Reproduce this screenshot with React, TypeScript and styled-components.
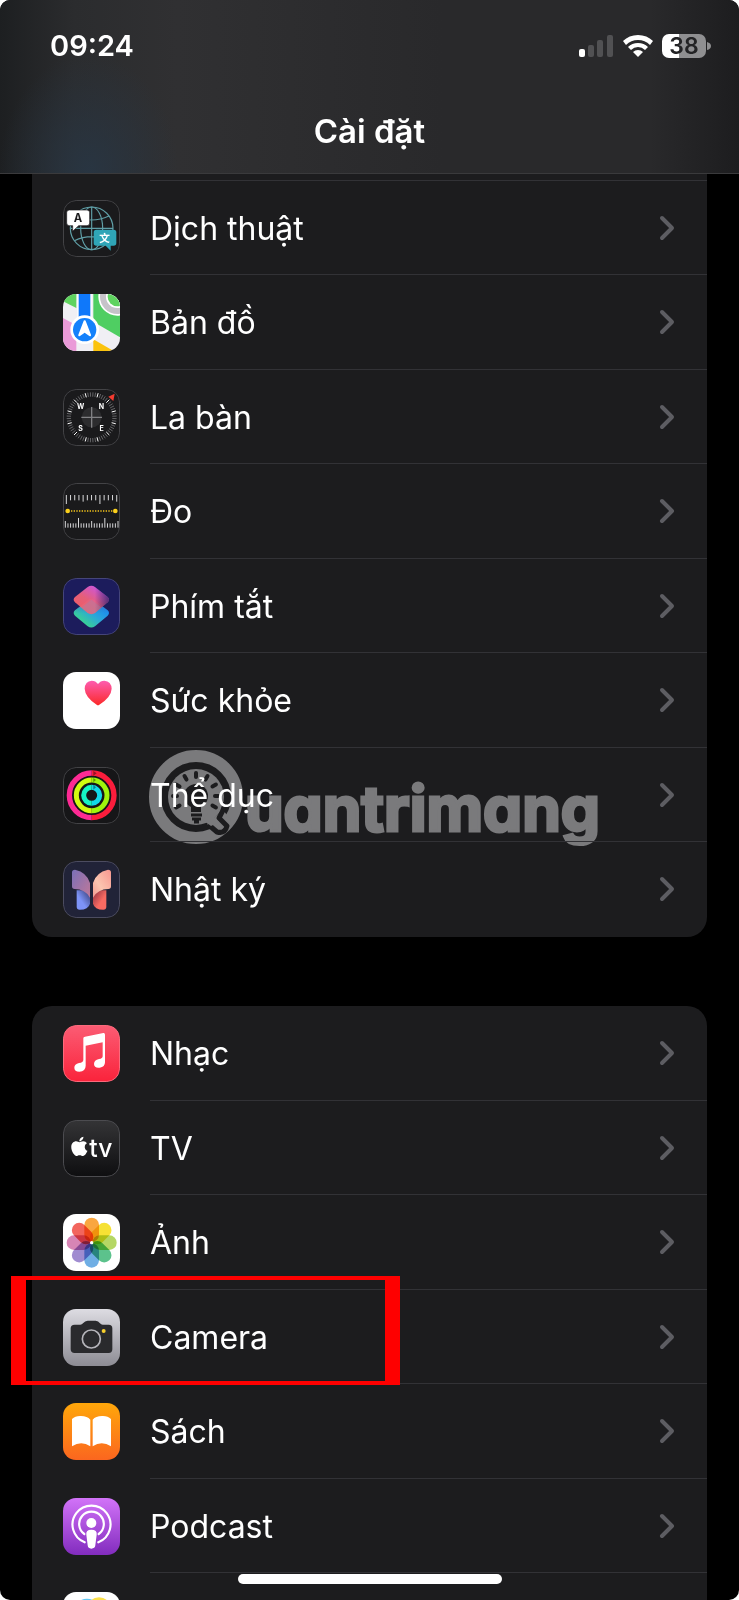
import React from "react";
import styled, { createGlobalStyle } from "styled-components";
import { FaApple } from "react-icons/fa";

const FONT = `Inter, "Noto Sans", "Liberation Sans", sans-serif`;

const GlobalStyle = createGlobalStyle`
  * { box-sizing: border-box; }
  html, body { margin: 0; background: #fff; }
  body { font-family: ${FONT}; color: #fff; }
`;

const Screen = styled.div`
  position: relative;
  display: flex;
  flex-direction: column;
  height: 100vh;
  overflow: hidden;
  background: #000;
  border-radius: 10px;
`;

const Header = styled.header`
  flex: none;
  height: 174px;
  border-bottom: 1px solid #3a3a3c;
  background:
    radial-gradient(ellipse 90px 120px at 12% 100%, rgba(40, 54, 68, 0.9), rgba(40, 54, 68, 0)),
    linear-gradient(90deg, #1d1f21 0%, #2b2c2e 10%, #303032 24%, #29292b 60%, #29292b 88%, #1d1d1f 100%);
`;

const StatusBar = styled.div`
  display: flex;
  align-items: center;
  justify-content: space-between;
  padding: 28px 28px 0 50px;
  height: 63px;
`;

const Time = styled.time`
  font-size: 29px;
  line-height: 34px;
  font-weight: 600;
`;

const StatusIcons = styled.div`
  display: flex;
  align-items: center;
  gap: 9px;
`;

const Title = styled.h1`
  margin: 47px 0 0;
  text-align: center;
  font-size: 33px;
  line-height: 42px;
  font-weight: 600;
`;

const Content = styled.main`
  flex: 1;
  min-height: 0;
  display: flex;
  flex-direction: column;
  gap: 69px;
  padding: 0 32px;
`;

const Group = styled.ul<{ $open?: "top" | "bottom" }>`
  flex: none;
  list-style: none;
  margin: 0;
  padding: 0;
  background: #1c1c1e;
  border-radius: ${(p) => (p.$open === "top" ? "0 0 20px 20px" : "20px 20px 0 0")};
`;

const Item = styled.li`
  position: relative;
  height: 95px;
  &:nth-child(even) {
    height: 94px;
  }
`;

const ScrolledItem = styled.li`
  height: 7px;
  margin-left: 118px;
  border-bottom: 1px solid #323236;
`;

const RowLink = styled.a`
  position: relative;
  display: flex;
  align-items: center;
  height: 100%;
  padding-left: 31px;
  gap: 30px;
  color: inherit;
  text-decoration: none;
`;

const RowBody = styled.span<{ $last?: boolean }>`
  flex: 1;
  display: flex;
  align-items: center;
  justify-content: space-between;
  height: 100%;
  padding-right: 32px;
  border-bottom: 1px solid ${(p) => (p.$last ? "transparent" : "#323236")};
`;

const Label = styled.span`
  padding-top: 2px;
  font-size: 32px;
  line-height: 42px;
  font-weight: 400;
  white-space: nowrap;
`;

const AppIcon = styled.svg`
  flex: none;
  display: block;
  width: 57px;
  height: 57px;
  border-radius: 13px;
`;

const Watermark = styled.div`
  position: absolute;
  left: 117px;
  top: 2px;
  display: flex;
  color: #7a7a7c;
  pointer-events: none;
`;

const WatermarkText = styled.span`
  margin-top: 21px;
  font-size: 62px;
  line-height: 76px;
  font-weight: 700;
  font-feature-settings: "cv11";
  -webkit-text-stroke: 3px #7a7a7c;
`;

const Highlight = styled.div`
  position: absolute;
  left: -21px;
  top: -14px;
  width: 389px;
  height: 109px;
  border: solid #fe0000;
  border-width: 4px 15px;
  z-index: 2;
`;

const HomeIndicator = styled.div`
  position: absolute;
  left: 50%;
  bottom: 16px;
  width: 264px;
  height: 10px;
  margin-left: -132px;
  border-radius: 5px;
  background: #fff;
  z-index: 3;
`;

const Svg = styled.svg`
  display: block;
  flex: none;
`;

function Frame({ fill, edge = "#434346" }: { fill: string; edge?: string }) {
  return <rect x="1.5" y="1.5" width="168" height="168" rx="38" fill={fill} stroke={edge} strokeWidth="3" />;
}

function polar(cx: number, cy: number, r: number, deg: number) {
  const a = ((deg - 90) * Math.PI) / 180;
  return [cx + r * Math.cos(a), cy + r * Math.sin(a)];
}

const TranslateIcon = () => (
  <AppIcon viewBox="0 0 171 171">
    <Frame fill="#1a1a1c" />
    <g fill="none" stroke="#5f9ea6" strokeWidth="3.5">
      <circle cx="86" cy="85" r="64" />
      <ellipse cx="86" cy="85" rx="33" ry="64" />
      <path d="M86 21V149M22 85H150M34 48Q86 72 138 48M34 122Q86 98 138 122" />
    </g>
    <path d="M19 30H72Q80 30 80 38V69Q80 77 72 77H47L29 94V77H19Q11 77 11 69V38Q11 30 19 30Z" fill="#fff" stroke="#1a1a1c" strokeWidth="2" />
    <text x="45" y="66" textAnchor="middle" fontFamily={FONT} fontSize="34" fontWeight="700" fill="#1a1a1c">A</text>
    <path d="M100 89H152Q160 89 160 97V129Q160 137 152 137H143V152L128 137H100Q92 137 92 129V97Q92 89 100 89Z" fill="#2fa5b7" />
    <text x="125" y="125" textAnchor="middle" fontFamily={`"Noto Sans CJK SC", sans-serif`} fontSize="32" fontWeight="700" fill="#fff">文</text>
  </AppIcon>
);

const MapsIcon = () => (
  <AppIcon viewBox="0 0 171 171">
    <rect width="171" height="171" fill="#f0eff4" />
    <path d="M0 0H40V42L0 22Z" fill="#5fd35f" />
    <path d="M91 0H171V130L91 83Z" fill="#4fce62" />
    <circle cx="163" cy="8" r="57" fill="#fff" />
    <circle cx="163" cy="8" r="52" fill="#c6c3c9" />
    <circle cx="163" cy="8" r="34" fill="#fff" />
    <circle cx="163" cy="8" r="29" fill="#5fd35f" />
    <path d="M0 72L40 94V171H0Z" fill="#ea9ad8" />
    <path d="M91 136L152 171H91Z" fill="#fbc30d" />
    <path d="M43 0H86V90H43Z" fill="#fff" />
    <path d="M47 0H82V90H47Z" fill="#0f78fa" />
    <circle cx="65" cy="107" r="43" fill="#fff" />
    <circle cx="65" cy="107" r="35" fill="#1481fb" />
    <path d="M65 79Q68 79 69 83L84 122Q85 129 79 126L65 116L51 126Q45 129 46 122L61 83Q62 79 65 79Z" fill="#fff" />
  </AppIcon>
);

const CompassIcon = () => (
  <AppIcon viewBox="0 0 171 171">
    <Frame fill="#1a1a1c" />
    {Array.from({ length: 60 }, (_, i) => {
      const [x1, y1] = polar(86, 85, 62, i * 6 + 45);
      const [x2, y2] = polar(86, 85, 75, i * 6 + 45);
      return <line key={i} x1={x1} y1={y1} x2={x2} y2={y2} stroke={i % 5 === 0 ? "#fff" : "#8b8b8e"} strokeWidth={i % 5 === 0 ? 3 : 2} />;
    })}
    <circle cx="86" cy="85" r="30" fill="#2c2c2e" />
    <path d="M86 54V116M55 85H117" stroke="#818184" strokeWidth="4" />
    <path d="M136 23L155 14L151 36Z" fill="#f33b30" />
    <g fill="#fff" fontFamily={FONT} fontSize="21" fontWeight="700" textAnchor="middle">
      <text x="53" y="60">W</text>
      <text x="115" y="60">N</text>
      <text x="53" y="125">S</text>
      <text x="116" y="125">E</text>
    </g>
  </AppIcon>
);

const MeasureIcon = () => (
  <AppIcon viewBox="0 0 171 171">
    <Frame fill="#1a1a1c" />
    <g stroke="#d8d8da" strokeWidth="3">
      {Array.from({ length: 13 }, (_, i) => {
        const x = 10 + i * 12.6;
        return <line key={i} x1={x} x2={x} y1="36" y2={i % 8 === 0 ? 63 : i % 4 === 0 ? 56 : 52} />;
      })}
      {Array.from({ length: 21 }, (_, i) => {
        const x = 7 + i * 7.9;
        return <line key={i} x1={x} x2={x} y1={i % 10 === 5 ? 105 : i % 5 === 0 ? 114 : 121} y2="134" />;
      })}
    </g>
    <path d="M24 84H148" stroke="#f5c518" strokeWidth="4" strokeDasharray="4 4" />
    <circle cx="14" cy="84" r="7" fill="#fbd01c" />
    <circle cx="157" cy="84" r="7" fill="#fbd01c" />
  </AppIcon>
);

const UPPER_TILE = "M74 27Q85 20 96 27L134 57Q142 65 134 73L96 105Q85 112 74 105L36 73Q28 65 36 57Z";
const LOWER_TILE = "M76 67Q85 60 94 67L134 97Q142 105 134 113L96 145Q85 152 74 145L36 113Q28 105 36 97Z";

const ShortcutsIcon = () => (
  <AppIcon viewBox="0 0 171 171">
    <defs>
      <linearGradient id="scA" x1="0" y1="1" x2="1" y2="0">
        <stop offset="0.1" stopColor="#3fe07a" />
        <stop offset="0.5" stopColor="#2ba8d8" />
        <stop offset="0.9" stopColor="#147efb" />
      </linearGradient>
      <linearGradient id="scB" x1="0.2" y1="0.9" x2="0.8" y2="0.1">
        <stop offset="0.1" stopColor="#f8606a" />
        <stop offset="0.45" stopColor="#f0627a" />
        <stop offset="1" stopColor="#d558e6" />
      </linearGradient>
      <linearGradient id="scC" x1="0" y1="0" x2="1" y2="0">
        <stop offset="0.6" stopColor="#1c1c5e" stopOpacity="0" />
        <stop offset="1" stopColor="#1c1c5e" stopOpacity="0.7" />
      </linearGradient>
      <linearGradient id="scD" x1="0" y1="0" x2="0" y2="1">
        <stop offset="0" stopColor="#6a4a80" stopOpacity="0.6" />
        <stop offset="0.5" stopColor="#406a90" stopOpacity="0" />
      </linearGradient>
    </defs>
    <Frame fill="#1c1c5c" edge="#45457a" />
    <path d={LOWER_TILE} fill="url(#scA)" />
    <path d={LOWER_TILE} fill="url(#scD)" />
    <path d={UPPER_TILE} fill="url(#scB)" opacity="0.95" />
    <path d={UPPER_TILE} fill="url(#scC)" />
    <path d="M85 65L116 89L96 105Q85 112 74 105L54 89Z" fill="#8b8fc0" opacity="0.3" />
  </AppIcon>
);

const HealthIcon = () => (
  <AppIcon viewBox="0 0 171 171">
    <defs>
      <linearGradient id="heart" x1="0" y1="0" x2="0" y2="1">
        <stop offset="0" stopColor="#fd5cb0" />
        <stop offset="1" stopColor="#fb2a2a" />
      </linearGradient>
    </defs>
    <rect width="171" height="171" fill="#fff" />
    <path d="M105 36Q98 26 86 26Q66 28 65 50Q66 75 101 98Q105 101 109 98Q145 75 146 50Q145 28 124 26Q112 26 105 36Z" fill="url(#heart)" />
  </AppIcon>
);

const FitnessIcon = () => (
  <AppIcon viewBox="0 0 171 171">
    <Frame fill="#161618" />
    <g fill="none">
      <path d="M86 18A67 67 0 0 1 86 152" stroke="#fb1d3c" strokeWidth="16" />
      <path d="M86 152A67 67 0 0 1 86 18" stroke="#fd2a94" strokeWidth="16" />
      <path d="M86 39A46 46 0 0 1 86 131" stroke="#9ff60c" strokeWidth="15" />
      <path d="M86 131A46 46 0 0 1 86 39" stroke="#d2fb10" strokeWidth="15" />
      <path d="M86 61A24 24 0 0 1 86 109" stroke="#12d8e8" strokeWidth="15" />
      <path d="M86 109A24 24 0 0 1 86 61" stroke="#15f5c4" strokeWidth="15" />
    </g>
    <g fill="#000" opacity="0.4">
      <path d="M91 12L101 19L91 26Z" />
      <path d="M91 33L99 39L91 46Z" />
      <path d="M91 54L99 61L91 68Z" />
    </g>
  </AppIcon>
);

const JournalIcon = () => (
  <AppIcon viewBox="0 0 171 171">
    <defs>
      <linearGradient id="jA" x1="0" y1="0" x2="1" y2="1">
        <stop offset="0" stopColor="#7a70b8" />
        <stop offset="1" stopColor="#c07898" />
      </linearGradient>
      <linearGradient id="jB" x1="1" y1="0" x2="0" y2="1">
        <stop offset="0" stopColor="#f7968f" />
        <stop offset="0.6" stopColor="#fbc5b0" />
        <stop offset="1" stopColor="#f39a90" />
      </linearGradient>
      <linearGradient id="jC" x1="0" y1="1" x2="1" y2="0">
        <stop offset="0.4" stopColor="#7d93f8" />
        <stop offset="1" stopColor="#333a70" />
      </linearGradient>
      <linearGradient id="jD" x1="1" y1="1" x2="0" y2="0">
        <stop offset="0.4" stopColor="#f86a62" />
        <stop offset="1" stopColor="#8a3040" />
      </linearGradient>
    </defs>
    <Frame fill="#212338" edge="#4c4c60" />
    <path d="M41 88H81V128Q76 146 50 146Q41 146 41 137Z" fill="url(#jC)" />
    <path d="M130 88H90V128Q95 146 121 146Q130 146 130 137Z" fill="url(#jD)" />
    <path d="M27 34Q27 26 36 26Q72 34 81 66V110Q66 84 35 84Q27 84 27 76Z" fill="url(#jA)" />
    <path d="M144 34Q144 26 135 26Q99 34 90 66V110Q105 84 136 84Q144 84 144 76Z" fill="url(#jB)" />
  </AppIcon>
);

const MusicIcon = () => (
  <AppIcon viewBox="0 0 171 171">
    <defs>
      <linearGradient id="music" x1="0" y1="0" x2="0" y2="1">
        <stop offset="0" stopColor="#fb5c74" />
        <stop offset="1" stopColor="#fa233b" />
      </linearGradient>
    </defs>
    <Frame fill="url(#music)" edge="#fb6a7c" />
    <path d="M61 40Q61 36 66 35L121 24Q126 23 126 29V112Q126 126 110 128Q94 130 93 117Q93 105 108 102Q119 101 119 94V52L68 62V122Q68 138 49 140Q34 140 34 128Q34 117 48 114Q61 112 61 104Z" fill="#fff" />
  </AppIcon>
);

const TvIcon = () => (
  <AppIcon viewBox="0 0 171 171">
    <defs>
      <linearGradient id="tv" x1="0" y1="0" x2="0" y2="1">
        <stop offset="0" stopColor="#343436" />
        <stop offset="1" stopColor="#0e0e10" />
      </linearGradient>
    </defs>
    <Frame fill="url(#tv)" edge="#4c4c50" />
    <FaApple x="16" y="46" size="66" color="#fff" />
    <text x="79" y="112" fontFamily={FONT} fontSize="74" fontWeight="500" fill="#fff">tv</text>
  </AppIcon>
);

const PETALS = ["#f8961e", "#f5dc10", "#a8d048", "#3fb878", "#56a0e0", "#8f78c8", "#d070a8", "#f04a40"];

const Petal = styled.rect`
  mix-blend-mode: multiply;
`;

const PhotosIcon = () => (
  <AppIcon viewBox="0 0 171 171">
    <rect width="171" height="171" fill="#fff" />
    {PETALS.map((c, i) => (
      <Petal key={c} x="64" y="11" width="44" height="73" rx="22" fill={c} opacity="0.85" transform={`rotate(${i * 45} 86 86)`} />
    ))}
    <circle cx="86" cy="86" r="5" fill="#fff" />
  </AppIcon>
);

const CameraIcon = () => (
  <AppIcon viewBox="0 0 171 171">
    <defs>
      <linearGradient id="cam" x1="0" y1="0" x2="0" y2="1">
        <stop offset="0" stopColor="#dddce2" />
        <stop offset="1" stopColor="#8d8c94" />
      </linearGradient>
    </defs>
    <rect width="171" height="171" fill="url(#cam)" />
    <path d="M35 47H52Q57 47 60 43Q66 35 74 35H98Q106 35 111 43Q114 47 119 47H137Q148 47 148 58V121Q148 132 137 132H35Q23 132 23 121V58Q23 47 35 47Z" fill="#2a2a2d" />
    <circle cx="85" cy="90" r="27" fill="none" stroke="#b5b4ba" strokeWidth="5" />
    <circle cx="122" cy="66" r="6" fill="#f7cf2c" />
  </AppIcon>
);

const BooksIcon = () => (
  <AppIcon viewBox="0 0 171 171">
    <defs>
      <linearGradient id="books" x1="0" y1="0" x2="0" y2="1">
        <stop offset="0" stopColor="#ffa70a" />
        <stop offset="1" stopColor="#fb661f" />
      </linearGradient>
    </defs>
    <rect width="171" height="171" fill="url(#books)" />
    <path d="M27 48Q37 38 54 39Q73 39 82 50V130Q55 112 27 130Z" fill="#fff" />
    <path d="M144 48Q134 38 117 39Q98 39 89 50V130Q116 112 144 130Z" fill="#fff" />
  </AppIcon>
);

const PodcastIcon = () => (
  <AppIcon viewBox="0 0 171 171">
    <defs>
      <linearGradient id="pod" x1="0" y1="0" x2="0" y2="1">
        <stop offset="0" stopColor="#d273f8" />
        <stop offset="1" stopColor="#822cbe" />
      </linearGradient>
    </defs>
    <rect width="171" height="171" fill="url(#pod)" />
    <g fill="none" stroke="#fff" strokeWidth="6.5" strokeLinecap="round">
      <path d="M65 133A57 57 0 1 1 106 133" />
      <path d="M64 108A37 37 0 1 1 107 108" />
    </g>
    <circle cx="85" cy="75" r="15" fill="#fff" />
    <path d="M85 95Q103 95 101 110L97 142Q96 152 85 152Q75 152 74 142L70 110Q68 95 85 95Z" fill="#fff" />
  </AppIcon>
);

const GameCenterIcon = () => (
  <AppIcon viewBox="0 0 171 171">
    <rect width="171" height="171" fill="#fff" />
    <circle cx="72" cy="58" r="38" fill="#62c8f4" />
    <circle cx="108" cy="54" r="38" fill="#fbe04a" />
    <circle cx="60" cy="106" r="36" fill="#e85ac8" />
    <circle cx="112" cy="106" r="36" fill="#5fd35f" />
  </AppIcon>
);

const Chevron = () => (
  <Svg width="16" height="26" viewBox="0 0 16 26" aria-hidden="true">
    <path d="M3 3L13 13L3 23" fill="none" stroke="#5d5d62" strokeWidth="4" strokeLinecap="round" strokeLinejoin="round" />
  </Svg>
);

const SignalIcon = () => (
  <Svg width="35" height="22" viewBox="0 0 35 22">
    <rect x="0" y="14" width="6" height="8" rx="2" fill="#fff" />
    <rect x="9" y="10" width="6" height="12" rx="2" fill="#515153" />
    <rect x="18" y="5" width="6" height="17" rx="2" fill="#515153" />
    <rect x="28" y="0" width="6" height="22" rx="2" fill="#515153" />
  </Svg>
);

const WifiIcon = () => (
  <Svg width="30" height="22" viewBox="0 0 30 22">
    <path d="M15 0Q24 0 30 6L27 10Q22 5 15 5T3 10L0 6Q6 0 15 0Z" fill="#fff" />
    <path d="M15 8Q21 8 25 12L22 15Q19 12 15 12T8 15L5 12Q9 8 15 8Z" fill="#fff" />
    <path d="M15 15Q18 15 20 17L15 22L10 17Q12 15 15 15Z" fill="#fff" />
  </Svg>
);

const BatteryIcon = () => (
  <Svg width="49" height="24" viewBox="0 0 49 24">
    <defs>
      <linearGradient id="bat">
        <stop offset="0.38" stopColor="#fff" />
        <stop offset="0.38" stopColor="#8f8f91" />
      </linearGradient>
    </defs>
    <rect width="44" height="24" rx="7" fill="url(#bat)" />
    <path d="M45 8Q49 9 49 12T45 16Z" fill="#8f8f91" />
    <text x="22" y="20" textAnchor="middle" fontFamily={FONT} fontSize="23" fontWeight="600" fill="#232325">38</text>
  </Svg>
);

const WatermarkLogo = () => (
  <Svg width="96" height="96" viewBox="0 0 96 96">
    <circle cx="47" cy="47" r="41" fill="none" stroke="#7a7a7c" strokeWidth="12" />
    <circle cx="47" cy="47" r="28" fill="#7a7a7c" />
    <path d="M58 74L74 60L82 70L72 84Z" fill="#7a7a7c" />
    <path d="M76 54Q74 62 70 68L78 76Q76 84 68 82L61 76" fill="none" stroke="#1c1c1e" strokeWidth="5" strokeLinecap="round" strokeLinejoin="round" />
    <path d="M60 62L70 72L62 76L54 70Z" fill="#7a7a7c" />
    <circle cx="47" cy="46" r="12" fill="#1c1c1e" />
    <path d="M42 54H52V62H42Z" fill="#1c1c1e" />
    <path d="M42 65H53M43 69H52M45 72H50" stroke="#1c1c1e" strokeWidth="3" />
    {[-120, -90, -60, -30, 0, 30, 60, 90, 120].map((deg) => {
      const [x1, y1] = polar(47, 46, 19, deg);
      const [x2, y2] = polar(47, 46, 23, deg);
      return <line key={deg} x1={x1} y1={y1} x2={x2} y2={y2} stroke="#1c1c1e" strokeWidth="4" strokeLinecap="round" />;
    })}
  </Svg>
);

interface Entry {
  label: string;
  Icon: React.ComponentType;
  marked?: boolean;
  branded?: boolean;
}

const SYSTEM_APPS: Entry[] = [
  { label: "Dịch thuật", Icon: TranslateIcon },
  { label: "Bản đồ", Icon: MapsIcon },
  { label: "La bàn", Icon: CompassIcon },
  { label: "Đo", Icon: MeasureIcon },
  { label: "Phím tắt", Icon: ShortcutsIcon },
  { label: "Sức khỏe", Icon: HealthIcon },
  { label: "Thể dục", Icon: FitnessIcon, branded: true },
  { label: "Nhật ký", Icon: JournalIcon },
];

const MEDIA_APPS: Entry[] = [
  { label: "Nhạc", Icon: MusicIcon },
  { label: "TV", Icon: TvIcon },
  { label: "Ảnh", Icon: PhotosIcon },
  { label: "Camera", Icon: CameraIcon, marked: true },
  { label: "Sách", Icon: BooksIcon },
  { label: "Podcast", Icon: PodcastIcon },
  { label: "", Icon: GameCenterIcon },
];

function renderRows(entries: Entry[]) {
  return entries.map(({ label, Icon, marked, branded }, i) => (
    <Item key={i}>
      {branded && (
        <Watermark>
          <WatermarkLogo />
          <WatermarkText>uantrimang</WatermarkText>
        </Watermark>
      )}
      <RowLink href="#">
        <Icon />
        <RowBody $last={i === entries.length - 1}>
          <Label>{label}</Label>
          <Chevron />
        </RowBody>
      </RowLink>
      {marked && <Highlight />}
    </Item>
  ));
}

export default function App() {
  return (
    <>
      <GlobalStyle />
      <Screen>
        <Header>
          <StatusBar>
            <Time>09:24</Time>
            <StatusIcons>
              <SignalIcon />
              <WifiIcon />
              <BatteryIcon />
            </StatusIcons>
          </StatusBar>
          <Title>Cài đặt</Title>
        </Header>
        <Content>
          <Group $open="top">
            <ScrolledItem />
            {renderRows(SYSTEM_APPS)}
          </Group>
          <Group $open="bottom">{renderRows(MEDIA_APPS)}</Group>
        </Content>
        <HomeIndicator />
      </Screen>
    </>
  );
}
